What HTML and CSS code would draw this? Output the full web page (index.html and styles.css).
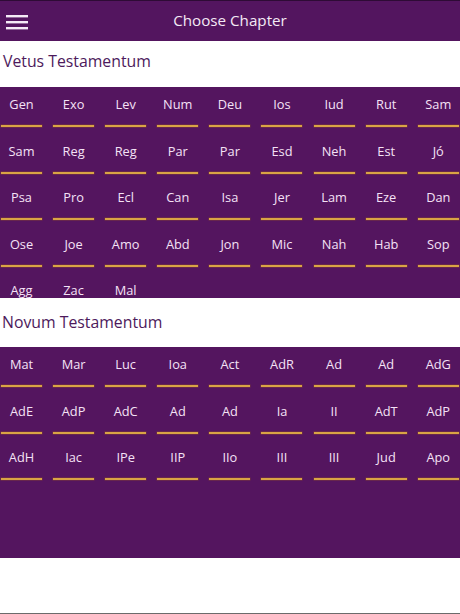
FILE: index.html
```html
<!DOCTYPE html>
<html>
<head>
<meta charset="utf-8">
<link rel="stylesheet" href="styles.css">
</head>
<body>
<div class="app">
  <header class="topbar">
    <div class="menu" aria-label="menu">
      <svg width="22" height="16" viewBox="0 0 22 16"><rect x="0" y="1" width="22" height="2.4" fill="#f4eaf6"/><rect x="0" y="7" width="22" height="2.4" fill="#f4eaf6"/><rect x="0" y="13" width="22" height="2.4" fill="#f4eaf6"/></svg>
    </div>
    <div class="title">Choose Chapter</div>
  </header>

  <div class="section-title first">Vetus Testamentum</div>
  <div class="grid">
    <div class="cell"><span>Gen</span></div>
    <div class="cell"><span>Exo</span></div>
    <div class="cell"><span>Lev</span></div>
    <div class="cell"><span>Num</span></div>
    <div class="cell"><span>Deu</span></div>
    <div class="cell"><span>Ios</span></div>
    <div class="cell"><span>Iud</span></div>
    <div class="cell"><span>Rut</span></div>
    <div class="cell"><span>Sam</span></div>
    <div class="cell"><span>Sam</span></div>
    <div class="cell"><span>Reg</span></div>
    <div class="cell"><span>Reg</span></div>
    <div class="cell"><span>Par</span></div>
    <div class="cell"><span>Par</span></div>
    <div class="cell"><span>Esd</span></div>
    <div class="cell"><span>Neh</span></div>
    <div class="cell"><span>Est</span></div>
    <div class="cell"><span>Jó</span></div>
    <div class="cell"><span>Psa</span></div>
    <div class="cell"><span>Pro</span></div>
    <div class="cell"><span>Ecl</span></div>
    <div class="cell"><span>Can</span></div>
    <div class="cell"><span>Isa</span></div>
    <div class="cell"><span>Jer</span></div>
    <div class="cell"><span>Lam</span></div>
    <div class="cell"><span>Eze</span></div>
    <div class="cell"><span>Dan</span></div>
    <div class="cell"><span>Ose</span></div>
    <div class="cell"><span>Joe</span></div>
    <div class="cell"><span>Amo</span></div>
    <div class="cell"><span>Abd</span></div>
    <div class="cell"><span>Jon</span></div>
    <div class="cell"><span>Mic</span></div>
    <div class="cell"><span>Nah</span></div>
    <div class="cell"><span>Hab</span></div>
    <div class="cell"><span>Sop</span></div>
    <div class="cell"><span>Agg</span></div>
    <div class="cell"><span>Zac</span></div>
    <div class="cell"><span>Mal</span></div>
  </div>

  <div class="section-title second">Novum Testamentum</div>
  <div class="grid">
    <div class="cell"><span>Mat</span></div>
    <div class="cell"><span>Mar</span></div>
    <div class="cell"><span>Luc</span></div>
    <div class="cell"><span>Ioa</span></div>
    <div class="cell"><span>Act</span></div>
    <div class="cell"><span>AdR</span></div>
    <div class="cell"><span>Ad</span></div>
    <div class="cell"><span>Ad</span></div>
    <div class="cell"><span>AdG</span></div>
    <div class="cell"><span>AdE</span></div>
    <div class="cell"><span>AdP</span></div>
    <div class="cell"><span>AdC</span></div>
    <div class="cell"><span>Ad</span></div>
    <div class="cell"><span>Ad</span></div>
    <div class="cell"><span>Ia</span></div>
    <div class="cell"><span>II</span></div>
    <div class="cell"><span>AdT</span></div>
    <div class="cell"><span>AdP</span></div>
    <div class="cell"><span>AdH</span></div>
    <div class="cell"><span>Iac</span></div>
    <div class="cell"><span>IPe</span></div>
    <div class="cell"><span>IIP</span></div>
    <div class="cell"><span>IIo</span></div>
    <div class="cell"><span>III</span></div>
    <div class="cell"><span>III</span></div>
    <div class="cell"><span>Jud</span></div>
    <div class="cell"><span>Apo</span></div>
  </div>
  <div class="rest"></div>
</div>
</body>
</html>
```

FILE: styles.css
```css
html, body {
  margin: 0;
  padding: 0;
  background: #ffffff;
}
.app {
  width: 460px;
  height: 614px;
  overflow: hidden;
  display: flex;
  flex-direction: column;
  font-family: "Open Sans", "Noto Sans", sans-serif;
  box-sizing: border-box;
  border-bottom: 1px solid #6b6b6b;
}
.topbar {
  height: 41px;
  flex: 0 0 41px;
  box-sizing: border-box;
  border-top: 1px solid #2e0b35;
  background: #53155f;
  display: flex;
  align-items: center;
  position: relative;
}
.menu {
  width: 22px;
  height: 16px;
  margin-left: 6px;
  margin-top: 2px;
  display: flex;
}
.title {
  position: absolute;
  left: 0;
  right: 0;
  text-align: center;
  color: #f3e9f5;
  font-size: 15.2px;
  line-height: 41px;
  top: -1px;
  pointer-events: none;
}
.section-title {
  color: #4d1a5c;
  font-size: 15.8px;
  line-height: 24px;
  padding-left: 3px;
  display: flex;
  align-items: center;
  box-sizing: border-box;
}
.section-title.first {
  height: 46px;
  flex: 0 0 46px;
  padding-bottom: 7px;
}
.section-title.second {
  height: 49px;
  flex: 0 0 49px;
  padding-left: 2px;
  padding-bottom: 1px;
}
.grid {
  height: 211px;
  flex: 0 0 211px;
  overflow: hidden;
  background: #54155f;
  display: grid;
  grid-template-columns: repeat(9, 52.1px);
  grid-auto-rows: 46.6px;
  padding-left: 1px;
  box-sizing: border-box;
}
.cell {
  width: 41px;
  display: flex;
  flex-direction: column;
  align-items: center;
  box-sizing: border-box;
  padding-top: 7px;
  height: 46.6px;
}
.cell span {
  color: #f4e2f6;
  font-size: 12.8px;
  line-height: 20px;
  height: 20px;
  white-space: nowrap;
}
.cell::after {
  content: "";
  display: block;
  width: 41px;
  height: 2px;
  margin-top: 11px;
  background: #d9a445;
  box-shadow: 0 0 0 0.5px #7a3a3a;
}
.rest {
  flex: 1 1 auto;
  background: #ffffff;
}
```
